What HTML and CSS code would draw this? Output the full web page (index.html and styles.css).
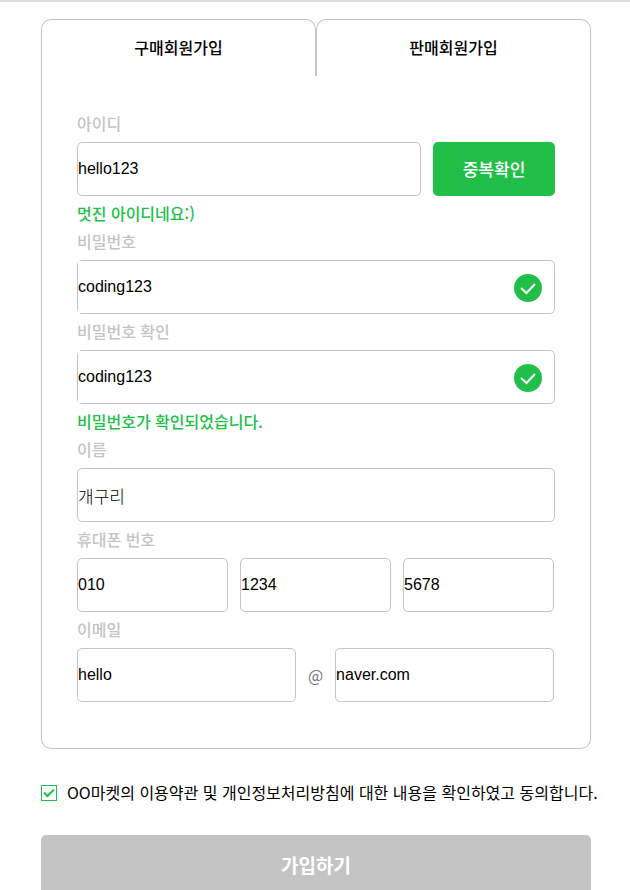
FILE: index.html
```html
<!DOCTYPE html>
<html lang="ko">
<head>
  <meta charset="utf-8">
  <meta name="viewport" content="width=device-width, initial-scale=1">
  <title>회원가입</title>
  <link rel="stylesheet" href="styles.css">
</head>
<body>
  <main class="join">
    <form class="join-form">
      <div class="tabs" role="tablist">
        <button class="tab" type="button" role="tab" aria-selected="true">구매회원가입</button>
        <button class="tab" type="button" role="tab" aria-selected="false">판매회원가입</button>
      </div>
      <div class="panel">
        <label class="label" for="user-id">아이디</label>
        <div class="row">
          <input class="field" id="user-id" type="text" value="hello123">
          <button class="check-button" type="button">중복확인</button>
        </div>
        <p class="message">멋진 아이디네요:)</p>

        <label class="label" for="password">비밀번호</label>
        <div class="field-box">
          <input class="field-inner" id="password" type="text" value="coding123">
          <svg class="check-icon" viewBox="0 0 28 28" aria-hidden="true">
            <circle cx="14" cy="14" r="14" />
            <path d="M7 14l5.500 5L21 10" />
          </svg>
        </div>

        <label class="label" for="password-confirm">비밀번호 확인</label>
        <div class="field-box">
          <input class="field-inner" id="password-confirm" type="text" value="coding123">
          <svg class="check-icon" viewBox="0 0 28 28" aria-hidden="true">
            <circle cx="14" cy="14" r="14" />
            <path d="M7 14l5.500 5L21 10" />
          </svg>
        </div>
        <p class="message">비밀번호가 확인되었습니다.</p>

        <label class="label" for="user-name">이름</label>
        <input class="field field-korean" id="user-name" type="text" value="개구리">

        <label class="label" for="phone-first">휴대폰 번호</label>
        <div class="row row-split">
          <input class="field" id="phone-first" type="text" value="010">
          <input class="field" type="text" value="1234" aria-label="휴대폰 번호 가운데 자리">
          <input class="field" type="text" value="5678" aria-label="휴대폰 번호 마지막 자리">
        </div>

        <label class="label" for="email-id">이메일</label>
        <div class="row row-split">
          <input class="field" id="email-id" type="text" value="hello">
          <span class="at">@</span>
          <input class="field" type="text" value="naver.com" aria-label="이메일 도메인">
        </div>
      </div>

      <div class="consent">
        <input class="consent-box" id="consent" type="checkbox" checked>
        <label class="consent-text" for="consent">OO마켓의 이용약관 및 개인정보처리방침에 대한 내용을 확인하였고 동의합니다.</label>
      </div>
      <button class="submit" type="submit">가입하기</button>
    </form>
  </main>
</body>
</html>
```

FILE: styles.css
```css
:root {
  --line: #c4c4c4;
  --green: #21bf48;
}

* {
  box-sizing: border-box;
}

body {
  margin: 0;
  border-top: 2px solid #dcdcdc;
  background: #fff;
  color: #000;
  font: 16px/20px "Noto Sans CJK KR", sans-serif;
}

.join {
  padding: 17px 39px 0 41px;
}

.tabs {
  display: flex;
}

.tab {
  flex: 1;
  height: 57px;
  padding: 0 0 2px;
  border: 1px solid var(--line);
  border-bottom: 0;
  border-radius: 10px 10px 0 0;
  background: #fff;
  color: #000;
  font: inherit;
  font-weight: 500;
}

.panel {
  display: flex;
  flex-direction: column;
  gap: 8px;
  padding: 38px 35px 46px;
  border: 1px solid var(--line);
  border-top: 0;
  border-radius: 0 0 10px 10px;
}

.label,
.message,
.consent-text {
  padding-bottom: 2px;
  line-height: 18px;
}

.label {
  color: var(--line);
  font-weight: 500;
}

.message {
  margin: 0;
  color: var(--green);
  font-weight: 500;
}

.row {
  display: flex;
  align-items: center;
  gap: 12px;
}

.row-split {
  padding-right: 1px;
}

.field,
.field-inner {
  flex: 1;
  min-width: 0;
  padding: 0;
  background: #fff;
  color: #000;
  font: 16px/20px "Liberation Sans", "Noto Sans CJK KR", sans-serif;
}

.field {
  flex-basis: 0;
  height: 54px;
  border: 1px solid var(--line);
  border-radius: 5px;
}

.panel > .field {
  flex: none;
}

.field-korean {
  font: 300 17px/20px "Noto Sans CJK KR", sans-serif;
}

.field-box {
  display: flex;
  align-items: center;
  height: 54px;
  padding-right: 12px;
  border: 1px solid var(--line);
  border-radius: 5px;
}

.field-inner {
  height: 52px;
  border: 0;
}

.check-icon {
  width: 28px;
  height: 30px;
  padding-top: 2px;
  fill: var(--green);
}

.check-icon path {
  fill: none;
  stroke: #fff;
  stroke-width: 2;
}

.check-button {
  width: 122px;
  height: 54px;
  padding: 0;
  border: 0;
  border-radius: 5px;
  background: var(--green);
  color: #fff;
  font: inherit;
  font-size: 17px;
  font-weight: 500;
}

.at {
  color: #767676;
}

.consent {
  display: flex;
  align-items: center;
  gap: 10px;
  margin: 34px 0 32px;
  white-space: nowrap;
}

.consent-box {
  appearance: none;
  flex: none;
  width: 16px;
  height: 16px;
  margin: 0;
  border: 1px solid var(--green);
  background: url("data:image/svg+xml,%3Csvg xmlns='http://www.w3.org/2000/svg' viewBox='0 0 14 14'%3E%3Cpath d='M2 6.500L5.500 10L12 3.500' fill='none' stroke='%2321bf48' stroke-width='2'/%3E%3C/svg%3E") center / 14px 14px no-repeat;
}

.submit {
  display: block;
  width: 100%;
  height: 60px;
  padding: 0;
  border: 0;
  border-radius: 5px;
  background: var(--line);
  color: #fff;
  font: inherit;
  font-size: 19px;
  font-weight: 700;
}
```
